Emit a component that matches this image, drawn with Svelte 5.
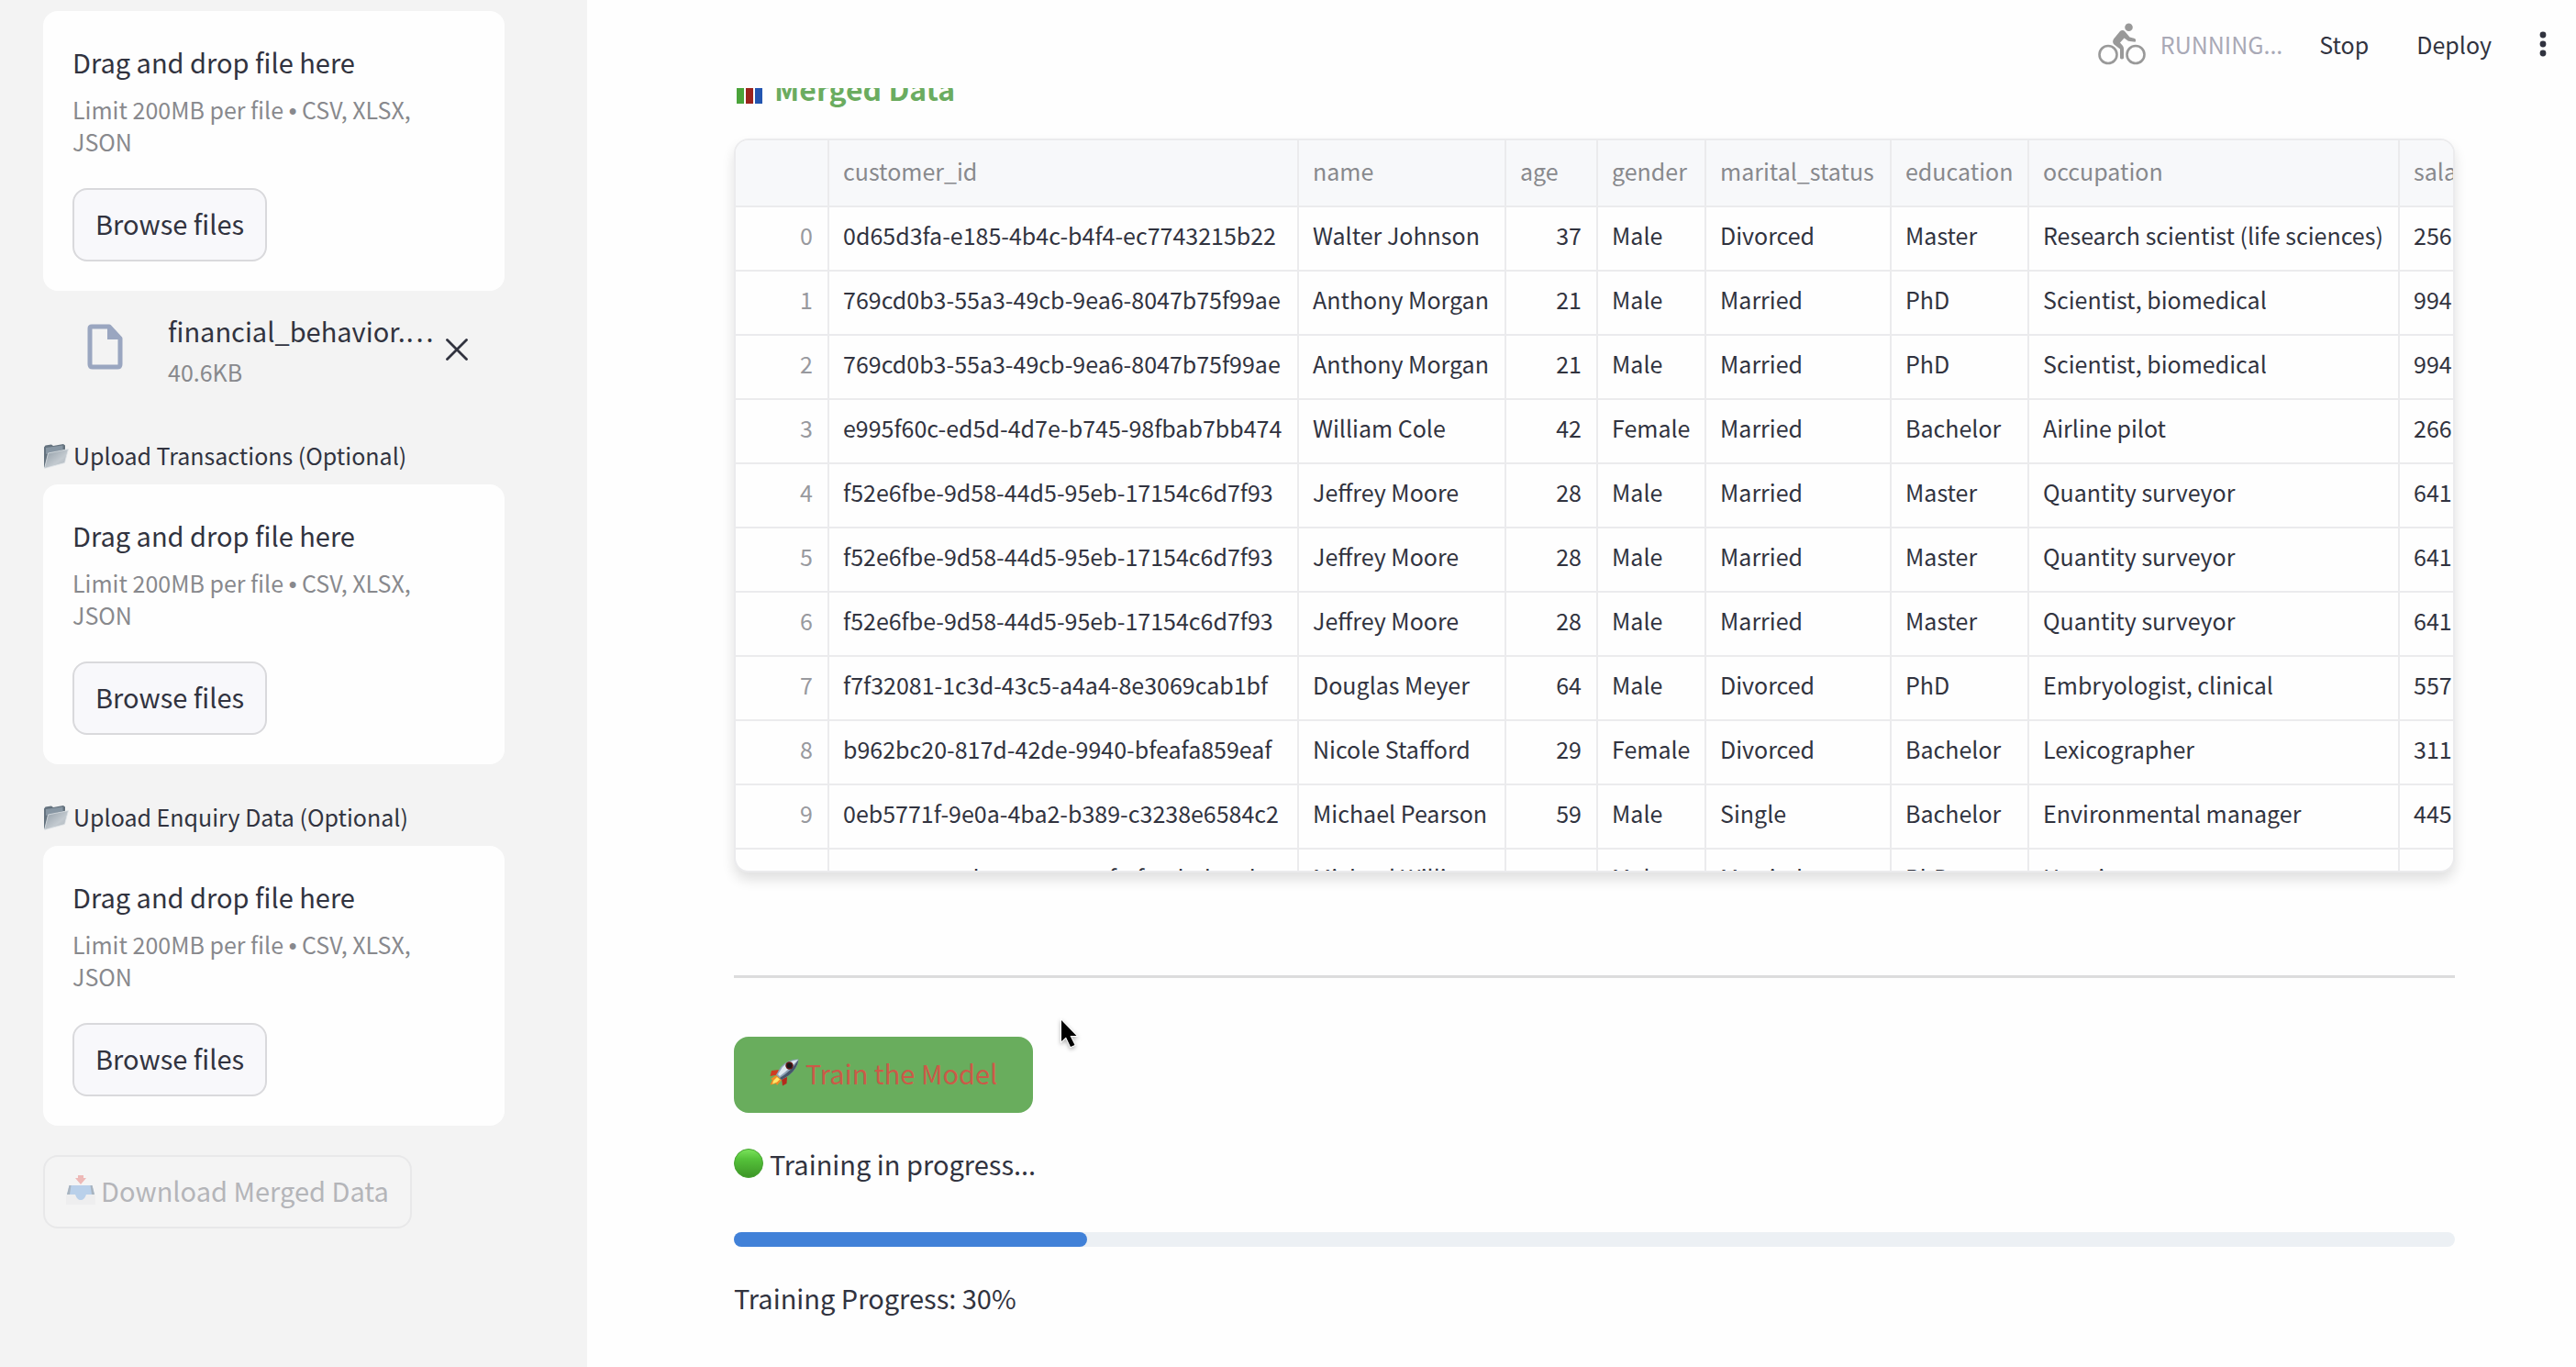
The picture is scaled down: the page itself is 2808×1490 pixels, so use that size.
<script>
  const columns = ['customer_id', 'name', 'age', 'gender', 'marital_status', 'education', 'occupation', 'salary'];

  const rows = [
    ['0d65d3fa-e185-4b4c-b4f4-ec7743215b22', 'Walter Johnson', 37, 'Male', 'Divorced', 'Master', 'Research scientist (life sciences)', '256'],
    ['769cd0b3-55a3-49cb-9ea6-8047b75f99ae', 'Anthony Morgan', 21, 'Male', 'Married', 'PhD', 'Scientist, biomedical', '994'],
    ['769cd0b3-55a3-49cb-9ea6-8047b75f99ae', 'Anthony Morgan', 21, 'Male', 'Married', 'PhD', 'Scientist, biomedical', '994'],
    ['e995f60c-ed5d-4d7e-b745-98fbab7bb474', 'William Cole', 42, 'Female', 'Married', 'Bachelor', 'Airline pilot', '266'],
    ['f52e6fbe-9d58-44d5-95eb-17154c6d7f93', 'Jeffrey Moore', 28, 'Male', 'Married', 'Master', 'Quantity surveyor', '641'],
    ['f52e6fbe-9d58-44d5-95eb-17154c6d7f93', 'Jeffrey Moore', 28, 'Male', 'Married', 'Master', 'Quantity surveyor', '641'],
    ['f52e6fbe-9d58-44d5-95eb-17154c6d7f93', 'Jeffrey Moore', 28, 'Male', 'Married', 'Master', 'Quantity surveyor', '641'],
    ['f7f32081-1c3d-43c5-a4a4-8e3069cab1bf', 'Douglas Meyer', 64, 'Male', 'Divorced', 'PhD', 'Embryologist, clinical', '557'],
    ['b962bc20-817d-42de-9940-bfeafa859eaf', 'Nicole Stafford', 29, 'Female', 'Divorced', 'Bachelor', 'Lexicographer', '311'],
    ['0eb5771f-9e0a-4ba2-b389-c3238e6584c2', 'Michael Pearson', 59, 'Male', 'Single', 'Bachelor', 'Environmental manager', '445'],
    ['482ac0a3-adca-4026-9a0f-4f77d2d0a0b9', 'Michael Williams', 44, 'Male', 'Married', 'PhD', 'Housing manager', '203']
  ];

  const progress = 30;
  const filled = 20.5;
</script>

{#snippet folder()}
  <svg class="folder" viewBox="0 0 28 28" aria-hidden="true">
    <defs>
      <linearGradient id="folder-front" x1="0" y1="0" x2="1" y2="1">
        <stop offset="0" stop-color="#8e9aa4" />
        <stop offset="0.6" stop-color="#c3cad0" />
        <stop offset="1" stop-color="#a9b1b8" />
      </linearGradient>
    </defs>
    <path d="M1 4.5 L2.5 2.5 L9 1.5 L11 3 L22 1 L24 2.5 V20 L2 27 L1 26 Z" fill="#64727e" />
    <path d="M3 5 L21.5 2.5 V7 L3 12 Z" fill="#8796a3" />
    <path d="M5.5 11 L27.5 6.5 L23.5 21.5 L1.5 27.5 Z" fill="url(#folder-front)" stroke="#dfe4e8" stroke-width="0.8" />
  </svg>
{/snippet}

{#snippet dropzone(id)}
  <section class="dropzone" aria-labelledby={id}>
    <p class="drop-title" {id}>Drag and drop file here</p>
    <p class="small muted">Limit 200MB per file <span class="bullet">•</span> CSV, XLSX, JSON</p>
    <button type="button" class="btn browse">Browse files</button>
  </section>
{/snippet}

<div class="app">
  <aside class="sidebar">
    {@render dropzone('drop-behavior')}

    <div class="file">
      <svg class="file-icon" viewBox="0 0 40 50" aria-hidden="true">
        <path d="M5 3 H24 L36 16 V44 Q36 47 33 47 H6 Q3 47 3 44 V5 Q3 3 5 3 Z" fill="none" stroke="#9aa6c0" stroke-width="5" stroke-linejoin="round" />
        <path d="M22 2 L38 17 H22 Z" fill="#9aa6c0" />
      </svg>
      <div class="file-text">
        <div class="file-name">financial_behavior.…</div>
        <div class="small muted">40.6KB</div>
      </div>
      <button type="button" class="remove" aria-label="Remove file">
        <svg viewBox="0 0 24 24" aria-hidden="true">
          <path d="M1.5 1.5 L22.5 22.5 M22.5 1.5 L1.5 22.5" stroke="#31333f" stroke-width="2.8" stroke-linecap="round" />
        </svg>
      </button>
    </div>

    <div class="upload">
      <div class="label small">{@render folder()}Upload Transactions (Optional)</div>
      {@render dropzone('drop-transactions')}
    </div>

    <div class="upload">
      <div class="label small">{@render folder()}Upload Enquiry Data (Optional)</div>
      {@render dropzone('drop-enquiry')}
    </div>

    <button type="button" class="btn download" disabled>
      <svg class="inbox" viewBox="0 0 32 34" aria-hidden="true">
        <path d="M3 13 L29 13 L32 24 V33 H0 V24 Z" fill="#eeeeef" />
        <path d="M3.5 12 H28.5 L31 22 H22 Q20 28 16 28 T10 22 H1 Z" fill="#b9d0ea" />
        <path d="M3.5 12 L1 22 H4 L5.5 12 Z M28.5 12 L31 22 H28 L26.5 12 Z" fill="#a9b4bf" />
        <path d="M13 1 H19 V4 H22 L16 11 L10 4 H13 Z" fill="#edb9b7" />
      </svg>
      Download Merged Data
    </button>
  </aside>

  <div class="main">
    <header class="toolbar">
      <svg class="bike" viewBox="0 0 52 46" aria-hidden="true">
        <g fill="none" stroke="#999">
          <circle cx="11" cy="34.5" r="9.5" stroke-width="2.6" />
          <circle cx="41" cy="34.5" r="9.5" stroke-width="2.6" />
        </g>
        <circle cx="33.5" cy="4.8" r="4.3" fill="#999" />
        <path d="M24 9 Q27 7 29.5 9.5 L34.5 15.5 L40 17 Q42 18.5 40.5 20.8 L33 19.8 L28.5 16.5 L24 21.5 L27 25 Q28 26.5 28 28 V38.5 Q26 40.5 24 38.5 V28.5 L17.5 23.5 Q15 21 17 17.5 Z" fill="#999" />
      </svg>
      <span class="status">RUNNING...</span>
      <button type="button" class="tool stop">Stop</button>
      <button type="button" class="tool deploy">Deploy</button>
      <button type="button" class="tool dots" aria-label="Main menu">
        <svg viewBox="0 0 8 28" aria-hidden="true">
          <circle cx="4" cy="4" r="3.4" /><circle cx="4" cy="14" r="3.4" /><circle cx="4" cy="24" r="3.4" />
        </svg>
      </button>
    </header>

    <main class="content">
      <h3 class="heading">
        <svg class="chart" viewBox="0 0 30 34" aria-hidden="true">
          <rect x="1" y="6" width="8" height="28" fill="#4aa33a" />
          <rect x="11" y="13" width="8" height="21" fill="#9b231d" />
          <rect x="21" y="2" width="8" height="32" fill="#2355b0" />
        </svg>
        Merged Data
      </h3>

      <div class="frame">
        <table>
          <colgroup>
            <col class="c-index" /><col class="c-id" /><col class="c-name" /><col class="c-age" /><col class="c-gender" />
            <col class="c-marital" /><col class="c-education" /><col class="c-occupation" /><col class="c-salary" />
          </colgroup>
          <thead>
            <tr>
              <th aria-label="index"></th>
              {#each columns as column}<th scope="col">{column}</th>{/each}
            </tr>
          </thead>
          <tbody>
            {#each rows as row, i}
              <tr>
                <th scope="row">{i}</th>
                {#each row as cell}<td class:num={typeof cell === 'number'}>{cell}</td>{/each}
              </tr>
            {/each}
          </tbody>
        </table>
      </div>

      <hr />

      <button type="button" class="btn train">
        <svg class="rocket" viewBox="0 0 32 30" aria-hidden="true">
          <path d="M10 12 L2 13 L0.5 19 L8 17.5 Z" fill="#cf3a22" />
          <path d="M19 20 L18.5 27 L14 29.5 L13 22 Z" fill="#b52a1c" />
          <path d="M7 18 L1 22 L3 23 L0.5 28.5 L7 27 L8 29 L13 23 Z" fill="#f08a24" />
          <path d="M8 20 L4 24 L3 27.5 L8 25.5 L11 22.5 Z" fill="#ffe76a" />
          <path d="M31.5 0.5 Q20 0 12 9 L7 17.5 L13 23 L21 18 Q31 10 31.5 0.5 Z" fill="#8fa3b8" />
          <path d="M31 1 Q21 2 14 9 L9 17 L11 19 Q23 10 31 1 Z" fill="#dfe8f0" />
          <path d="M13 23 L21 18 Q30 11 31.5 1 Q24 13 11 21 Z" fill="#46566b" />
          <circle cx="21.5" cy="7.5" r="4.2" fill="#5a1512" />
          <circle cx="21.5" cy="7.5" r="2.6" fill="#17181c" />
        </svg>
        Train the Model
      </button>

      <p class="state">
        <svg class="ball" viewBox="0 0 32 32" aria-hidden="true">
          <defs>
            <linearGradient id="ball-fill" x1="0" y1="0" x2="0" y2="1">
              <stop offset="0" stop-color="#7be35c" />
              <stop offset="0.35" stop-color="#55c23a" />
              <stop offset="1" stop-color="#3c9426" />
            </linearGradient>
          </defs>
          <circle cx="16" cy="16" r="15.5" fill="url(#ball-fill)" stroke="#48a432" />
        </svg>
        Training in progress...
      </p>

      <div class="track" role="progressbar" aria-label="Training" aria-valuemin="0" aria-valuemax="100" aria-valuenow={progress}>
        <div class="fill" style:width="{filled}%"></div>
      </div>

      <p class="state">Training Progress: {progress}%</p>
    </main>
  </div>

  <svg class="pointer" viewBox="0 0 26 40" aria-hidden="true">
    <path d="M4 3 V26 L9 21.5 L14 32 L18.5 30 L13.5 20 H20.5 Z" fill="#000" stroke="#fff" stroke-width="2" paint-order="stroke" />
  </svg>
</div>

<style>
  :global(body) {
    margin: 0;
    background: #fefefe;
  }

  .app {
    position: relative;
    display: flex;
    min-height: 100vh;
    box-sizing: border-box;
    font-family: 'Noto Sans CJK SC', 'Noto Sans', sans-serif;
    font-size: 29px;
    line-height: 52px;
    color: #31333f;
  }

  p,
  h3 {
    margin: 0;
  }

  svg {
    display: block;
    flex: none;
  }

  button {
    font: inherit;
    color: inherit;
    cursor: pointer;
  }

  .small {
    font-size: 25px;
    line-height: 35px;
  }

  .muted {
    color: #88898d;
  }

  .bullet {
    font-family: 'Liberation Sans', sans-serif;
    line-height: 1;
  }

  .sidebar {
    flex: none;
    width: 640px;
    box-sizing: border-box;
    padding: 12px 90px 32px 47px;
    background: #f3f3f3;
  }

  .dropzone {
    box-sizing: border-box;
    padding: 29px 32px 32px;
    border-radius: 16px;
    background: #fefefe;
  }

  .drop-title {
    margin-bottom: 9px;
  }

  .btn {
    display: flex;
    align-items: center;
    box-sizing: border-box;
    height: 80px;
    padding: 0 23px 5px;
    border: 2px solid #d9d9dc;
    border-radius: 16px;
    background: #f8f8fb;
    white-space: nowrap;
  }

  .browse {
    margin-top: 33px;
  }

  .file {
    display: flex;
    align-items: flex-start;
    padding: 17px 40px 16px 48px;
  }

  .file-icon {
    width: 40px;
    height: 50px;
    margin-top: 19px;
  }

  .file-text {
    flex: 1;
    min-width: 0;
    margin-left: 48px;
  }

  .file-name {
    margin-bottom: 2px;
    white-space: nowrap;
  }

  .remove {
    flex: none;
    margin-top: 35px;
    padding: 0;
    border: 0;
    background: none;
  }

  .remove svg {
    width: 24px;
    height: 24px;
  }

  .upload {
    margin-top: 40px;
  }

  .label {
    display: flex;
    align-items: center;
    gap: 5px;
    margin-bottom: 14px;
  }

  .folder {
    width: 28px;
    height: 28px;
  }

  .download {
    gap: 6px;
    margin-top: 32px;
    border-color: #e8e8e9;
    background: #f4f4f4;
    color: #b4b5b9;
    cursor: default;
  }

  .inbox {
    width: 32px;
    height: 34px;
  }

  .main {
    flex: 1;
    min-width: 0;
    display: flex;
    flex-direction: column;
  }

  .toolbar {
    display: flex;
    flex: none;
    align-items: center;
    justify-content: flex-end;
    height: 96px;
    padding-right: 32px;
    font-size: 25px;
  }

  .bike {
    width: 52px;
    height: 46px;
  }

  .status {
    margin-left: 16px;
    color: #a9a9b6;
  }

  .tool {
    padding: 0;
    border: 0;
    background: none;
  }

  .stop {
    margin-left: 40px;
  }

  .deploy,
  .dots {
    margin-left: 52px;
  }

  .dots svg {
    width: 8px;
    height: 28px;
    fill: #31333f;
  }

  .content {
    flex: 1;
    overflow: hidden;
    padding: 0 132px 32px 160px;
  }

  .heading {
    display: flex;
    align-items: center;
    gap: 12px;
    margin: -26px 0 29px 2px;
    font-size: 32px;
    font-weight: 700;
    color: #6bac60;
  }

  .chart {
    width: 30px;
    height: 34px;
  }

  .frame {
    box-sizing: border-box;
    height: 800px;
    overflow: hidden;
    border: 2px solid #ebebed;
    border-radius: 16px;
    background: #fefefe;
    box-shadow: 0 8px 14px rgba(0, 0, 0, 0.12);
  }

  table {
    width: 2000px;
    table-layout: fixed;
    border-collapse: separate;
    border-spacing: 0;
    font-size: 25px;
    line-height: 36px;
  }

  .c-index { width: 102px; }
  .c-id { width: 512px; }
  .c-name { width: 226px; }
  .c-age { width: 100px; }
  .c-gender { width: 118px; }
  .c-marital { width: 202px; }
  .c-education { width: 150px; }
  .c-occupation { width: 404px; }

  th,
  td {
    box-sizing: border-box;
    height: 70px;
    padding: 0 16px 8px 15px;
    border-right: 2px solid #ebebed;
    border-bottom: 2px solid #ebebed;
    font-weight: 400;
    text-align: left;
    white-space: nowrap;
  }

  thead th {
    height: 73px;
    padding-bottom: 6px;
    background: #f7f8fa;
    color: #88898d;
  }

  tbody th {
    color: #98999e;
    text-align: right;
  }

  .num {
    text-align: right;
  }

  hr {
    height: 3px;
    margin: 112px 0 64px;
    border: 0;
    background: #dcdcdd;
  }

  .train {
    gap: 7px;
    height: 83px;
    padding: 0 37px 5px;
    border-color: #69ad5d;
    background: #69ad5d;
    color: #cb5a48;
  }

  .rocket {
    width: 32px;
    height: 30px;
  }

  .state {
    display: flex;
    align-items: center;
    gap: 7px;
    margin-top: 29px;
  }

  .ball {
    width: 32px;
    height: 32px;
  }

  .track {
    height: 16px;
    margin-top: 49px;
    border-radius: 8px;
    background: #ecf0f4;
  }

  .fill {
    height: 100%;
    border-radius: 8px;
    background: #4181d8;
  }

  .pointer {
    position: absolute;
    top: 1109px;
    left: 1153px;
    width: 26px;
    height: 40px;
    filter: drop-shadow(0 2px 2px rgba(0, 0, 0, 0.3));
  }
</style>
